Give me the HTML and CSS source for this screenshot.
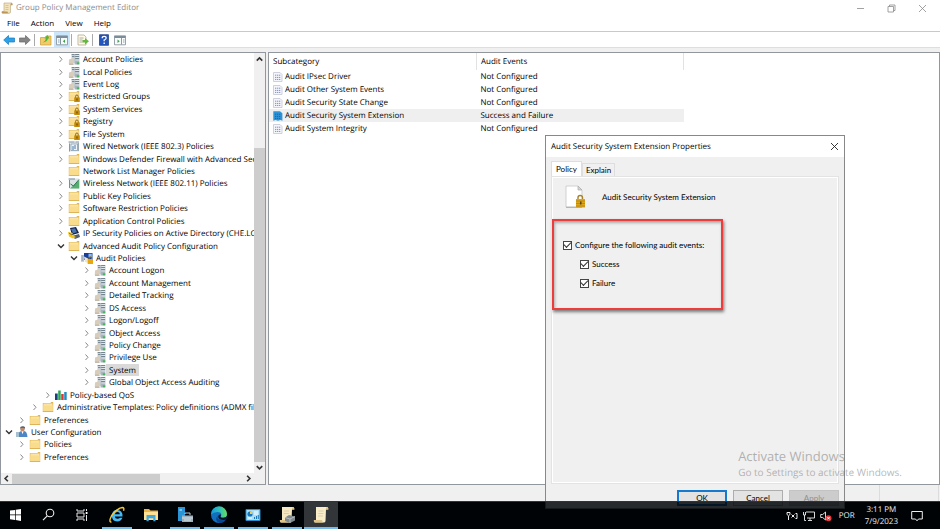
FILE: index.html
```html
<!DOCTYPE html>
<html lang="en">
<head>
<meta charset="utf-8">
<title>Group Policy Management Editor</title>
<link rel="stylesheet" href="styles.css">
</head>
<body>
<svg class="sprite" aria-hidden="true">
  <symbol id="right" viewBox="0 0 8 8"><path d="M2.5 1.500 5 4.300 2.500 7" fill="none" stroke="#888" stroke-width="1"/></symbol>
  <symbol id="down" viewBox="0 0 8 8"><path d="M1 2.500 4 5.500 7 2.500" fill="none" stroke="#333" stroke-width="1.4"/></symbol>
  <symbol id="folder" viewBox="0 0 12 12"><path d="M.8 2h7.500l1-1h1.900v9.500H.8z" fill="#e2b54f"/><path d="M1.400 2.500h9.200v7.500H1.400z" fill="#fbe4a6"/><path d="M1.400 4.500h9.200v5.500H1.400z" fill="#f9dc8c"/><path d="M.8 10.500h10.400" stroke="#d9aa48" stroke-width=".8"/></symbol>
  <symbol id="lockfolder" viewBox="0 0 12 12"><use href="#folder"/><path d="M7.600 8V6.300a1.300 1.300 0 0 1 2.600 0V8" fill="none" stroke="#8b6b20"/><path d="M6.200 7.400h5.600V12H6.200z" fill="#c68c08"/><path d="M8.500 8.600h1v2h-1z" fill="#5e4100"/></symbol>
  <symbol id="server" viewBox="0 0 12 12"><path d="M3.500 1h4v9h-4z" fill="#c9d1d6"/><path d="M7 1h4.300v10.500H6.500z" fill="#a9b5bc"/><path d="M3.700 1.500h2.800M7.200 1.500h3.900M7.200 3.500h3.900M7.200 5.500h3.900M4 3.500h2.500" stroke="#667984" stroke-width=".8"/><path d="M7.300 2.500h3.700M7.300 4.500h3.700M7.300 7h3.700" stroke="#edf3f6" stroke-width=".8"/><path d="M1 6.500 5.500 5v6.300H.8z" fill="#d8cdbb"/><path d="M1 11.300h4.600" stroke="#9c907c" stroke-width=".7"/><path d="M8.800 9.300h2.500v2H8.800z" fill="#42b757"/></symbol>
  <symbol id="wired" viewBox="0 0 12 12"><path d="M1 1.500h10v10H1z" fill="#dfe6ea"/><path d="M.5 2h6M7.500 2H11M1.500 3.500v8M10.300 3v8" stroke="#7d909c" stroke-width=".9"/><path d="M3 4h6.500v6.500H3z" fill="#f1f5f9" stroke="#7c95ae" stroke-width=".7"/><path d="M5 6v4M7 5v4" stroke="#4678ad"/></symbol>
  <symbol id="wireless" viewBox="0 0 12 12"><path d="M1 1.500h10v10H1z" fill="#dce3e7"/><path d="M.5 2H7M1.500 3v8" stroke="#7d8e98"/><path d="M2 11.500 11.300 3v8.500z" fill="#57ad72"/><path d="m2.500 7 3 2 5.500-6.500" fill="none" stroke="#2a774b"/></symbol>
  <symbol id="ipsec" viewBox="0 0 12 12"><path d="m2 1 6-1 3 6-7 2z" fill="#18233d"/><path d="m3 2 4-.7 2 4-4 1z" fill="#4774b9"/><path d="m4 9 7-2 1 3-5 2z" fill="#555d66"/><path d="m0 5 5 1-1 2 4 2-3 1.500-4-2z" fill="#f2c51d"/><path d="m1 6 3 2" stroke="#735300" stroke-width=".7"/></symbol>
  <symbol id="audit" viewBox="0 0 12 12"><path d="M0 3h3v7H0z" fill="#cbd1d8"/><path d="M.5 4h2M.5 6h2M.5 8h2" stroke="#62788d" stroke-width=".7"/><path d="M3 1h8.500v7H3z" fill="#173f9a"/><path d="M7.500 1.700h3.300v3.500H7.500z" fill="#8bb9ff"/><path d="m3 4.500 4 2v4.500l-3-1z" fill="#ece5cf"/><path d="M8 7V6a1 1 0 0 1 2.500 0v1" fill="none" stroke="#987000"/><path d="M6.700 7H12v5H6.700z" fill="#e7a711"/></symbol>
  <symbol id="qos" viewBox="0 0 12 12"><path d="M0 4.500h2.700v6.500H0z" fill="#1d3f81"/><path d="M3.200 1.500h2.500V11H3.200z" fill="#27a755"/><path d="M6.200 5h2.500v6H6.200z" fill="#df3535"/><path d="M9.200 3h2.500v8H9.200z" fill="#218bc4"/></symbol>
  <symbol id="user" viewBox="0 0 12 12"><path d="M0 6h4v5H0z" fill="#a8bed1"/><circle cx="6.500" cy="3" r="2.300" fill="#c38866"/><path d="M4 2.500Q4 0 7 .2q2.500.3 2 2.500Q7 1 4 2.500z" fill="#56606c"/><path d="M3 11V8q0-3 3-3h2q3 0 3.500 6z" fill="#4e86c5"/><path d="m5.500 5.300 1 3 1.200-3z" fill="#fff"/></symbol>
  <symbol id="doc" viewBox="0 0 10 10"><path d="M.5.500h6.500l2 2v7H.500z" fill="#f5f6fb" stroke="#c3c5d2" stroke-width=".8"/><path d="M2 3.200h6M2 5.400h6M2 7.400h6" stroke="#7f8cc9" stroke-width="1" stroke-dasharray="1.300 .7"/></symbol>
  <symbol id="docsel" viewBox="0 0 10 10"><path d="M.3.300h6.700l2.400 2v7.400L7.500 9 5 9.700 2.500 9 .3 9.700z" fill="#2f93d8"/><path d="M2 3.200h6M2 5.400h6M2 7.400h6" stroke="#0f68ab" stroke-width="1" stroke-dasharray="1.300 .7"/></symbol>
  <symbol id="scroll" viewBox="0 0 12 12"><path d="M3 1h7.500q1 0 .8 2H9.500v7q0 1.300-1.500 1.300H1.500Q.5 11 1 9.500h2z" fill="#f3e3bc" stroke="#b9a273" stroke-width=".6"/><path d="M9.500 3h1.800q.3-2-.8-2-1 .3-1 2zM1 9.500h5.500q.2 1.800 1.200 1.800H1.500Q.5 11 1 9.500" fill="#bd955a"/><path d="M4.500 3.500h3M4.500 5.500h3M4.500 7.500h3" stroke="#c9b88c" stroke-width=".7"/></symbol>
</svg>

<main class="editor">
  <header class="titlebar">
    <svg class="i12"><use href="#scroll"/></svg>
    <h1>Group Policy Management Editor</h1>
    <button class="winbtn" aria-label="Minimize"><svg viewBox="0 0 9 9"><path d="M1 4.500h7"/></svg></button>
    <button class="winbtn" aria-label="Restore"><svg viewBox="0 0 9 9"><path d="M1 2.500h5.500V8H1zM2.500 2.500V1H8v5.500H6.500"/></svg></button>
    <button class="winbtn" aria-label="Close"><svg viewBox="0 0 9 9"><path d="m1 1 7 7M8 1 1 8"/></svg></button>
  </header>
  <nav class="menubar"><button>File</button><button>Action</button><button>View</button><button>Help</button></nav>
  <div class="toolbar">
    <button aria-label="Back"><svg viewBox="0 0 12 12"><path d="M.7 6 5.500 1.500V4H11.500v4H5.500v2.500z" fill="#2ba2e8" stroke="#1779be" stroke-width=".7"/></svg></button>
    <button aria-label="Forward"><svg viewBox="0 0 12 12"><path d="M11.300 6 6.500 1.500V4H.5v4h6v2.500z" fill="#858585" stroke="#696969" stroke-width=".7"/></svg></button>
    <i></i>
    <button aria-label="Up one level"><svg viewBox="0 0 12 12"><path d="M.5 3.500H5l1-1.500h5v9H.5z" fill="#f3cb69" stroke="#cb9c39" stroke-width=".7"/><path d="M2.500 8.500q3-1 3.500-4H4.500L7.500 1l2 3.500H8q-.5 3.500-5.500 4" fill="#4eb83c"/></svg></button>
    <button class="on" aria-label="Show console tree" aria-pressed="true"><svg viewBox="0 0 12 12"><path d="M.5 1.800h11v9H.5z" fill="#f7f9fb" stroke="#8b979f" stroke-width=".9"/><path d="M.5 3h11" stroke="#7d8d98" stroke-width="2"/><path d="M4.500 4v6.500" stroke="#8294a0"/><path d="M2 6h1.500M2 8h1.500" stroke="#8aa5bb"/><path d="M9 5.500v3.500L6.800 7.300z" fill="#38a34a"/></svg></button>
    <i></i>
    <button aria-label="Export list"><svg viewBox="0 0 12 12"><path d="M1 1h6l2 2v8H1z" fill="#fffbe8" stroke="#a69d81" stroke-width=".7"/><path d="M2.500 4h4M2.500 6h3M2.500 8h3" stroke="#878787" stroke-width=".7"/><path d="M5.500 6H8V4l4 3.300L8 10.500V8.500H5.500z" fill="#65b83f"/></svg></button>
    <i></i>
    <button aria-label="Help topics"><svg viewBox="0 0 12 12"><path d="M1.500.7h9v10.600h-9z" fill="#2356bd" stroke="#173980" stroke-width=".7"/><path d="M4.200 4.300q0-2 2-2t1.900 1.900Q8 5.300 6.200 6v1.300M6.200 8.500V10" fill="none" stroke="#fff" stroke-width="1.300"/></svg></button>
    <button aria-label="Show action pane"><svg viewBox="0 0 12 12"><path d="M.5 1.800h11v9H.5z" fill="#fafbfc" stroke="#8b979f" stroke-width=".9"/><path d="M.5 3h11" stroke="#7d8d98" stroke-width="2"/><path d="M7.500 4v6.500" stroke="#8b9aa5"/><path d="M3.500 5.500v3.500l2.200-1.700z" fill="#38a34a"/><path d="M9 6h1.500M9 8h1.500" stroke="#8aa5bb"/></svg></button>
  </div>
  <div class="panes">
    <section class="treepane">
      <ul class="tree">
        <li class="l4"><svg class="c"><use href="#right"/></svg><svg class="i12"><use href="#server"/></svg><span>Account Policies</span></li>
        <li class="l4"><svg class="c"><use href="#right"/></svg><svg class="i12"><use href="#server"/></svg><span>Local Policies</span></li>
        <li class="l4"><svg class="c"><use href="#right"/></svg><svg class="i12"><use href="#server"/></svg><span>Event Log</span></li>
        <li class="l4"><svg class="c"><use href="#right"/></svg><svg class="i12"><use href="#lockfolder"/></svg><span>Restricted Groups</span></li>
        <li class="l4"><svg class="c"><use href="#right"/></svg><svg class="i12"><use href="#lockfolder"/></svg><span>System Services</span></li>
        <li class="l4"><svg class="c"><use href="#right"/></svg><svg class="i12"><use href="#lockfolder"/></svg><span>Registry</span></li>
        <li class="l4"><svg class="c"><use href="#right"/></svg><svg class="i12"><use href="#lockfolder"/></svg><span>File System</span></li>
        <li class="l4"><svg class="c"><use href="#right"/></svg><svg class="i12"><use href="#wired"/></svg><span>Wired Network (IEEE 802.3) Policies</span></li>
        <li class="l4"><svg class="c"><use href="#right"/></svg><svg class="i12"><use href="#folder"/></svg><span>Windows Defender Firewall with Advanced Sec</span></li>
        <li class="l4"><svg class="c"></svg><svg class="i12"><use href="#folder"/></svg><span>Network List Manager Policies</span></li>
        <li class="l4"><svg class="c"><use href="#right"/></svg><svg class="i12"><use href="#wireless"/></svg><span>Wireless Network (IEEE 802.11) Policies</span></li>
        <li class="l4"><svg class="c"><use href="#right"/></svg><svg class="i12"><use href="#folder"/></svg><span>Public Key Policies</span></li>
        <li class="l4"><svg class="c"><use href="#right"/></svg><svg class="i12"><use href="#folder"/></svg><span>Software Restriction Policies</span></li>
        <li class="l4"><svg class="c"><use href="#right"/></svg><svg class="i12"><use href="#folder"/></svg><span>Application Control Policies</span></li>
        <li class="l4"><svg class="c"><use href="#right"/></svg><svg class="i12"><use href="#ipsec"/></svg><span>IP Security Policies on Active Directory (CHE.LC</span></li>
        <li class="l4"><svg class="c"><use href="#down"/></svg><svg class="i12"><use href="#folder"/></svg><span>Advanced Audit Policy Configuration</span></li>
        <li class="l5"><svg class="c"><use href="#down"/></svg><svg class="i12"><use href="#audit"/></svg><span>Audit Policies</span></li>
        <li class="l6"><svg class="c"><use href="#right"/></svg><svg class="i12"><use href="#server"/></svg><span>Account Logon</span></li>
        <li class="l6"><svg class="c"><use href="#right"/></svg><svg class="i12"><use href="#server"/></svg><span>Account Management</span></li>
        <li class="l6"><svg class="c"><use href="#right"/></svg><svg class="i12"><use href="#server"/></svg><span>Detailed Tracking</span></li>
        <li class="l6"><svg class="c"><use href="#right"/></svg><svg class="i12"><use href="#server"/></svg><span>DS Access</span></li>
        <li class="l6"><svg class="c"><use href="#right"/></svg><svg class="i12"><use href="#server"/></svg><span>Logon/Logoff</span></li>
        <li class="l6"><svg class="c"><use href="#right"/></svg><svg class="i12"><use href="#server"/></svg><span>Object Access</span></li>
        <li class="l6"><svg class="c"><use href="#right"/></svg><svg class="i12"><use href="#server"/></svg><span>Policy Change</span></li>
        <li class="l6"><svg class="c"><use href="#right"/></svg><svg class="i12"><use href="#server"/></svg><span>Privilege Use</span></li>
        <li class="l6 picked"><svg class="c"><use href="#right"/></svg><svg class="i12"><use href="#server"/></svg><span>System</span></li>
        <li class="l6"><svg class="c"><use href="#right"/></svg><svg class="i12"><use href="#server"/></svg><span>Global Object Access Auditing</span></li>
        <li class="l3"><svg class="c"><use href="#right"/></svg><svg class="i12"><use href="#qos"/></svg><span>Policy-based QoS</span></li>
        <li class="l2"><svg class="c"><use href="#right"/></svg><svg class="i12"><use href="#folder"/></svg><span>Administrative Templates: Policy definitions (ADMX fil</span></li>
        <li class="l1"><svg class="c"><use href="#right"/></svg><svg class="i12"><use href="#folder"/></svg><span>Preferences</span></li>
        <li class="l0"><svg class="c"><use href="#down"/></svg><svg class="i12"><use href="#user"/></svg><span>User Configuration</span></li>
        <li class="l1"><svg class="c"><use href="#right"/></svg><svg class="i12"><use href="#folder"/></svg><span>Policies</span></li>
        <li class="l1"><svg class="c"><use href="#right"/></svg><svg class="i12"><use href="#folder"/></svg><span>Preferences</span></li>
      </ul>
      <div class="vscroll"><svg viewBox="0 0 8 8"><path d="M2 5.500 4 3.500l2 2"/></svg><div class="vtrack"><div></div></div><svg viewBox="0 0 8 8"><path d="m2 3 2 2 2-2"/></svg></div>
      <div class="hscroll"><svg viewBox="0 0 8 8"><path d="M5 2 3 4l2 2"/></svg><div class="htrack"><div></div></div><svg viewBox="0 0 8 8"><path d="m3 2 2 2-2 2"/></svg></div>
    </section>
    <section class="listpane">
      <table>
        <thead><tr><th>Subcategory</th><th>Audit Events</th></tr></thead>
        <tbody>
          <tr><td><div><svg class="i10"><use href="#doc"/></svg><span>Audit IPsec Driver</span></div></td><td>Not Configured</td></tr>
          <tr><td><div><svg class="i10"><use href="#doc"/></svg><span>Audit Other System Events</span></div></td><td>Not Configured</td></tr>
          <tr><td><div><svg class="i10"><use href="#doc"/></svg><span>Audit Security State Change</span></div></td><td>Not Configured</td></tr>
          <tr class="sel"><td><div><svg class="i10"><use href="#docsel"/></svg><span>Audit Security System Extension</span></div></td><td>Success and Failure</td></tr>
          <tr><td><div><svg class="i10"><use href="#doc"/></svg><span>Audit System Integrity</span></div></td><td>Not Configured</td></tr>
        </tbody>
      </table>
    </section>
  </div>
  <div class="status"><span></span><span></span></div>
</main>

<section class="dialog" role="dialog" aria-labelledby="dlg">
  <header><h2 id="dlg">Audit Security System Extension Properties</h2><button aria-label="Close dialog"><svg viewBox="0 0 9 9"><path d="m1 1 7 7M8 1 1 8"/></svg></button></header>
  <div class="tabs" role="tablist"><button role="tab" class="active" aria-selected="true">Policy</button><button role="tab">Explain</button></div>
  <div class="sheet">
    <div class="subject">
      <svg viewBox="0 0 21 24"><path d="M1 1h12l4 4v17H1z" fill="#fff" stroke="#c6c6c6" stroke-width=".8"/><path d="M13 1v4h4z" fill="#d7d7d7" stroke="#aaa" stroke-width=".7"/><path d="M1 22.300h16" stroke="#aaa"/><path d="M13 15v-2.500q0-2 2.200-2t2.300 2V15" fill="none" stroke="#a5802c" stroke-width="1.400"/><path d="M11 14h9v8.500h-9z" fill="#dba51e"/><path d="M11 16h9M11 18.500h9M11 21h9" stroke="#b17d10" stroke-width=".7"/><path d="M15 16.500h1.500v3H15z" fill="#624605"/></svg>
      <span>Audit Security System Extension</span>
    </div>
    <div class="marked">
      <label><input type="checkbox" checked>Configure the following audit events:</label>
      <label class="sub"><input type="checkbox" checked>Success</label>
      <label class="sub"><input type="checkbox" checked>Failure</label>
    </div>
  </div>
  <footer><button class="ok">OK</button><button>Cancel</button><button disabled>Apply</button></footer>
</section>

<aside class="watermark"><strong>Activate Windows</strong><span>Go to Settings to activate Windows.</span></aside>

<footer class="taskbar">
  <button aria-label="Start"><svg viewBox="0 0 20 20"><path d="m4 5.600 5-.7v4.700H4zM9.700 4.800l5.300-.9v5.700H9.700zM4 10.300h5V15l-5-.7zM9.700 10.300H15V16l-5.300-.9z" fill="#fff"/></svg></button>
  <button aria-label="Search"><svg viewBox="0 0 20 20"><circle cx="11" cy="8" r="3.800" fill="none" stroke="#eee" stroke-width="1.100"/><path d="m8.300 10.800-4.300 4.300" stroke="#eee" stroke-width="1.200"/></svg></button>
  <button aria-label="Task view"><svg viewBox="0 0 20 20"><path d="M4 4v2h7V4M4 16v-2h7v2M4 8h7v4H4zM13.500 4v2M13.500 10v6" fill="none" stroke="#e5e5e5"/><path d="M12.700 7h1.800v2h-1.800z" fill="#fff"/></svg></button>
  <button class="run" aria-label="Internet Explorer"><svg viewBox="0 0 20 20"><path d="M15.500 11.400H7.800q.3 2.400 2.700 2.400 1.700 0 2.500-1.100h2.400q-1.100 3.700-5.300 3.700-5.200 0-5.200-5.600 0-5.900 5.400-5.900 5.400 0 5.200 6.500M7.900 9.200h5q-.2-2.100-2.400-2.100-2.200 0-2.600 2.100" fill="#45baf5"/><path d="M4.500 16.900q-2.200.4-1.300-3C4.500 9.200 10.600 3 15.300 2.500q2.300 0 1.200 3.300" fill="none" stroke="#f7c636" stroke-width="1.400"/></svg></button>
  <button aria-label="File Explorer"><svg viewBox="0 0 20 20"><path d="M3 4h5l1.500 1.500H17V15H3z" fill="#e9b448"/><path d="M3 7h14v8H3z" fill="#ffe293"/><path d="M5.500 10h9v6.300h-2.200v-3H7.700v3H5.500z" fill="#40a9df"/></svg></button>
  <button class="run" aria-label="Server Manager"><svg viewBox="0 0 20 20"><path d="M3 2h7v14H3z" fill="#2b94d5"/><path d="M4.500 5H7" stroke="#d5f0ff"/><path d="M10 9V8h5v2" fill="none" stroke="#b9cad3"/><path d="M7 10.500h11V17H7z" fill="#9fb2bf"/><path d="M7 13h11M9 15h7" stroke="#e3edf2" stroke-width=".8"/></svg></button>
  <button class="run" aria-label="Edge"><svg viewBox="0 0 20 20"><defs><linearGradient id="eg" x1="0" x2="1"><stop stop-color="#149ae0"/><stop offset=".6" stop-color="#35c5b0"/><stop offset="1" stop-color="#69df50"/></linearGradient></defs><circle cx="10" cy="10" r="8" fill="#126fc0"/><path d="M2 9.500A8 8 0 0 1 18 9q0 3.700-4.200 3.700-2.500 0-2.300-1.200 1-.8.8-2.300Q11.800 7 8.500 7 4.300 7 2 9.500" fill="url(#eg)"/><path d="M8.500 10.500q-1 5 6 4.700 1.500-.1 2.400-.7-2 3.500-6.400 3.500Q5 16 8.500 10.500" fill="#0b438c"/><path d="M12 9.500q0 1.300-.6 2 0 1.300 2.800 1.300 3 0 4-1.800v3l-3 1q-6 .2-6-3.500 0-2.300 2.800-2" fill="#071529"/></svg></button>
  <button class="run" aria-label="Control Panel"><svg viewBox="0 0 20 20"><path d="M3 4.500h14v11H3z" fill="#a8def8" stroke="#298bc7"/><circle cx="7" cy="9" r="2.600" fill="#1776bd"/><path d="M7 9V6.400A2.600 2.600 0 0 1 9.600 9z" fill="#f9ca48"/><path d="M11 7h4M11 9h4M5 13h4" stroke="#fff"/><path d="M11.500 14v-2M13.500 14v-3M15.300 14v-4" stroke="#1c75b4"/></svg></button>
  <button class="run" aria-label="Group Policy Management"><svg viewBox="0 0 20 20"><path d="M5 2h11q1.500 0 1.300 2.500H15L14.500 16q0 1.500-2 1.500H4q-1.500-.3-1-2.500h2z" fill="#f5e7c1"/><path d="M14.800 4.500h2.500Q17.500 2 16 2q-1.200.3-1.200 2.500zM3 15h8q.5 2.500 1.500 2.500H4Q2.500 17.500 3 15" fill="#dfc486"/><path d="M7 6h5M6.800 8.500h5" stroke="#dacda8"/><path d="M8 12.500 12 10l6 1.500v4L13 18l-5-2z" fill="#7f898e"/><path d="m8 12.500 5 1.500 5-2.500M13 14v4" fill="none" stroke="#c2cacc" stroke-width=".8"/></svg></button>
  <button class="run current" aria-label="Group Policy Management Editor"><svg viewBox="0 0 20 20"><path d="M5 2h11q1.500 0 1.300 2.500H15L14.500 16q0 1.500-2 1.500H4q-1.500-.3-1-2.500h2z" fill="#f8ecc9"/><path d="M14.800 4.500h2.500Q17.500 2 16 2q-1.200.3-1.200 2.500zM3 15h8q.5 2.500 1.500 2.500H4Q2.500 17.500 3 15" fill="#dfc486"/><path d="M7.500 6h5M7.300 8.500h5M7 11h5" stroke="#dccfab"/></svg></button>
  <div class="tray">
    <svg viewBox="0 0 12 12"><path d="M2.500 6v4M1 2.500h3v2q-1.500 2.500-3 0zM5.500 4.500l3 3M8.500 4.500l-3 3M9.500 3.500h1.500v5H9.500" fill="none" stroke="#eee"/></svg>
    <svg viewBox="0 0 12 12"><path d="M3 2h8.500v6H4M7 8v2M5 10.500h4M.5 2v3h2V2M1.500 5v5.500H3" fill="none" stroke="#eee" stroke-width=".9"/></svg>
    <svg viewBox="0 0 12 12"><path d="M.7 4.500h2L5.500 2v8L2.700 7.500h-2z" fill="none" stroke="#eee" stroke-width=".9"/><circle cx="8.500" cy="8.200" r="3" fill="#e5393b"/><path d="m7.300 7 2.400 2.400M9.700 7 7.300 9.400" stroke="#fff" stroke-width=".9"/></svg>
    <span class="lang">POR</span>
    <time datetime="2023-07-09T15:11"><span>3:11 PM</span><span>7/9/2023</span></time>
    <button aria-label="Notifications"><svg viewBox="0 0 12 12"><path d="M.7 1.500h10.600v7.500H7.500L6 10.800 4.500 9H.7z" fill="none" stroke="#eee"/></svg></button>
  </div>
</footer>
</body>
</html>
```
FILE: styles.css
```css
* { box-sizing: border-box; }

body {
  margin: 0;
  height: 100vh;
  display: flex;
  flex-direction: column;
  position: relative;
  overflow: hidden;
  background: #000;
  color: #000;
  font: 8px/12px "Open Sans", "Noto Sans", sans-serif;
  text-rendering: geometricPrecision;
}

button {
  margin: 0;
  padding: 0;
  border: 0;
  background: none;
  color: inherit;
  font: inherit;
}

svg { display: block; flex: none; }
.sprite { position: absolute; width: 0; height: 0; }
.i12 { width: 12px; height: 12px; }
.i10 { width: 10px; height: 10px; }

.editor {
  flex: 1;
  min-height: 0;
  display: flex;
  flex-direction: column;
  background: #f0f0f0;
}

.titlebar {
  display: flex;
  align-items: center;
  height: 16px;
  padding-left: 1px;
  background: #fff;
  color: #8c8c8c;
}
.titlebar h1 { flex: 1; margin: 0 0 0 3px; font-size: 8px; font-weight: 400; }
.winbtn { width: 31px; display: flex; justify-content: center; }
.winbtn svg { width: 9px; height: 9px; fill: none; stroke: #8a8a8a; stroke-width: .8; }
.winbtn:last-child { margin-right: 2px; }

.menubar {
  display: flex;
  gap: 11px;
  height: 15px;
  padding-left: 7px;
  background: #fff;
}
.menubar button { height: 14px; }

.toolbar {
  display: flex;
  align-items: center;
  height: 17px;
  padding-left: 1px;
  border-top: 1px solid #c8c9ca;
  border-bottom: 1px solid #dedede;
  background: #fff;
}
.toolbar button { display: flex; align-items: center; justify-content: center; width: 16px; height: 15px; }
.toolbar svg { width: 12px; height: 12px; }
.toolbar i { width: 1px; height: 12px; margin: 0 4px 0 1px; background: #aaa; }
.toolbar i + button { margin-left: -1px; }
.toolbar .on { background: #cbe6fa; }

.panes {
  flex: 1;
  min-height: 0;
  display: grid;
  grid-template-columns: 266px 1fr;
  gap: 2px;
  margin-top: 4px;
}
.treepane, .listpane { border: 1px solid #92979d; background: #fff; min-height: 0; }
.treepane {
  display: grid;
  grid-template-columns: 1fr 11px;
  grid-template-rows: 1fr 11px;
}

.tree {
  display: grid;
  grid-auto-rows: 1fr;
  min-width: 0;
  min-height: 0;
  overflow: hidden;
  margin: 0;
  padding: 0 0 10px;
  list-style: none;
}
.tree li { display: flex; align-items: center; min-height: 0; white-space: nowrap; }
.tree .c { width: 8px; height: 8px; margin-right: 3px; }
.tree span { padding: 2px 3px 0; line-height: 10px; }
.l0 { padding-left: 4px; }
.l1 { padding-left: 17px; }
.l2 { padding-left: 30px; }
.l3 { padding-left: 43px; }
.l4 { padding-left: 56px; }
.l5 { padding-left: 69px; }
.l6 { padding-left: 82px; }
.picked span { background: #d9d9d9; }

.vscroll, .hscroll { display: flex; align-items: center; background: #f0f0f0; }
.vscroll { flex-direction: column; }
.hscroll { grid-column: 1; }
.vscroll svg, .hscroll svg { width: 11px; height: 11px; fill: none; stroke: #333; stroke-width: 1.2; }
.vtrack { flex: 1; width: 100%; display: flex; align-items: flex-end; }
.vtrack div { width: 100%; height: 79%; background: #cdcdcd; }
.htrack { flex: 1; height: 10px; }
.htrack div { width: 64%; height: 100%; background: #cdcdcd; }
.treepane::after { content: ""; background: #f0f0f0; }

table { width: 62%; border-collapse: collapse; table-layout: fixed; }
th, td { padding: 0 0 0 4px; text-align: left; font-weight: 400; white-space: nowrap; }
th { height: 17px; border-right: 1px solid #e2e2e2; }
th:first-child, td:first-child { width: 50%; }
td { height: 13px; }
td div { display: flex; align-items: center; gap: 2px; }
.sel td { background: #efefef; }

.status { display: flex; justify-content: flex-end; height: 16px; }
.status span { width: 59px; border-left: 1px solid #dcdcdc; }
.status span:last-child { width: 2px; }

.dialog {
  position: absolute;
  left: 545px;
  top: 135px;
  bottom: 20px;
  width: 300px;
  display: flex;
  flex-direction: column;
  border: 1px solid #888;
  background: #f0f0f0;
}
.dialog header {
  display: flex;
  align-items: center;
  justify-content: space-between;
  height: 21px;
  padding: 0 5px;
  background: #fff;
}
.dialog h2 { margin: 0; font-size: 8px; font-weight: 400; }
.dialog header svg { width: 9px; height: 9px; fill: none; stroke: #222; stroke-width: .9; }
.tabs, .sheet, .dialog footer { font-family: Lato, "Liberation Sans", sans-serif; }
.tabs { display: flex; align-items: flex-end; height: 19px; padding: 0 5px; }
.tabs button { height: 13px; padding: 0 3px; border: 1px solid #dedede; border-bottom: 0; }
.tabs .active { height: 15px; padding: 0 4px; background: #fff; }
.sheet { flex: 1; margin: 0 5px; border: 2px solid #fff; outline: 1px solid #e3e3e3; outline-offset: -1px; }
.subject { display: flex; align-items: center; gap: 16px; padding: 7px 0 0 12px; }
.subject svg { width: 21px; height: 24px; }
.marked {
  display: flex;
  flex-direction: column;
  gap: 7px;
  width: 171px;
  height: 91px;
  margin-top: 10px;
  margin-left: -1px;
  padding: 18px 0 0 9px;
  border: 2px solid #ee3b3b;
  box-shadow: 1px 2px 3px #777, inset 1px 2px 3px #aaa;
}
label { display: flex; align-items: center; gap: 3px; white-space: nowrap; }
.sub { padding-left: 17px; }
input {
  appearance: none;
  display: grid;
  place-items: center;
  width: 9px;
  height: 9px;
  margin: 0;
  border: 1px solid #444;
  background: #fff;
}
input:checked::before {
  content: "";
  width: 6px;
  height: 3px;
  margin-bottom: 2px;
  border: solid #333;
  border-width: 0 0 1px 1px;
  transform: rotate(-45deg);
}
.dialog footer { display: flex; justify-content: flex-end; gap: 6px; padding: 6px 5px 2px; }
.dialog footer button { width: 50px; height: 16px; border: 1px solid #adadad; background: #e3e3e3; }
.dialog footer .ok { border: 2px solid #1679cd; }
.dialog footer button:disabled { background: #ccc; border-color: #c3c3c3; color: #909090; }

.watermark {
  position: absolute;
  right: 38px;
  bottom: 50px;
  display: flex;
  flex-direction: column;
  color: rgba(110, 110, 110, .5);
  font-size: 10px;
  line-height: 14px;
}
.watermark strong { font-size: 13px; font-weight: 400; line-height: 18px; }

.taskbar {
  position: relative;
  display: flex;
  height: 28px;
  border-top: 1px solid #333;
  background: rgba(0, 3, 6, .84);
  color: #eee;
}
.taskbar > button { display: flex; align-items: center; justify-content: center; width: 34px; border-bottom: 2px solid transparent; }
.taskbar > button > svg { width: 20px; height: 20px; }
.taskbar .run { border-image: linear-gradient(90deg, transparent 10%, #76b9ed 10% 90%, transparent 90%) 2; border-width: 0 0 2px; border-style: solid; }
.taskbar .current { background: #333639; border-image: none; border-color: #76b9ed; }
.taskbar > button:first-child { width: 32px; }
.tray { flex: 1; display: flex; align-items: center; justify-content: flex-end; gap: 5px; padding-right: 17px; }
.tray svg { width: 12px; height: 12px; }
.lang { margin-left: 2px; }
time { display: flex; flex-direction: column; align-items: center; margin: 0 8px 0 5px; }
```
